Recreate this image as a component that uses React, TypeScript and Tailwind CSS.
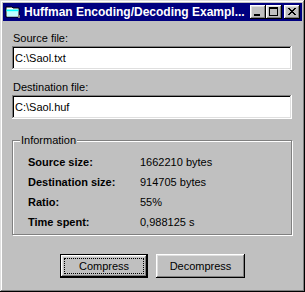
import React from 'react';

// Win95-style bevels
const RAISED =
  'shadow-[inset_-1px_-1px_#000,inset_1px_1px_#fff,inset_-2px_-2px_#808080,inset_2px_2px_#dfdfdf]';
const SUNKEN =
  'shadow-[inset_-1px_-1px_#fff,inset_1px_1px_#808080,inset_-2px_-2px_#dfdfdf,inset_2px_2px_#000]';

const INFO = [
  ['Source size:', '1662210 bytes'],
  ['Destination size:', '914705 bytes'],
  ['Ratio:', '55%'],
  ['Time spent:', '0,988125 s'],
];

function AppIcon() {
  return (
    <svg width="16" height="16" viewBox="0 0 16 16" aria-hidden className="shrink-0">
      <path d="M1 3h6l1 1h6v9H1z" fill="#fff" stroke="#000" strokeWidth="1" />
      <rect x="1.5" y="5.5" width="12" height="2" fill="#00ffff" />
      <path d="M2 7.5h11v5H2z" fill="#c0ffff" />
      <rect x="13" y="11" width="2" height="3" fill="#808080" />
    </svg>
  );
}

function CaptionButton({ kind }: { kind: 'min' | 'max' | 'close' }) {
  return (
    <button
      type="button"
      className={`relative flex h-[14px] w-[16px] items-center justify-center bg-[#c0c0c0] ${RAISED}`}
    >
      {kind === 'min' && <span className="absolute left-[4px] top-[9px] h-[2px] w-[6px] bg-black" />}
      {kind === 'max' && (
        <span className="absolute left-[3px] top-[2px] h-[9px] w-[9px] border border-t-2 border-black" />
      )}
      {kind === 'close' && (
        <svg width="8" height="7" viewBox="0 0 8 7" className="absolute left-[4px] top-[3px]" aria-hidden>
          <path
            d="M0 0h2v1h1v1h2V1h1V0h2v1H7v1H6v1H5v1h1v1h1v1h1v1H6V6H5V5H3v1H2v1H0V6h1V5h1V4h1V3H2V2H1V1H0z"
            fill="#000"
          />
        </svg>
      )}
    </button>
  );
}

function Field({ label, value }: { label: string; value: string }) {
  return (
    <div className="flex flex-col">
      <span className="pl-[1px]">{label}</span>
      <div className={`mt-[1px] flex h-[24px] items-center bg-white pl-[3px] ${SUNKEN}`}>{value}</div>
    </div>
  );
}

export default function App() {
  return (
    <div
      className={`flex h-[292px] w-[305px] flex-col bg-[#c0c0c0] p-[3px] font-['Liberation_Sans',Arial,sans-serif] text-[11px] leading-[13px] text-black shadow-[inset_-1px_-1px_#000,inset_1px_1px_#dfdfdf,inset_-2px_-2px_#808080,inset_2px_2px_#fff]`}
    >
      <div className="flex h-[18px] items-center bg-[#000080] pl-[2px] pr-[2px]">
        <AppIcon />
        <span className="ml-[3px] flex-1 whitespace-nowrap text-[12px] font-bold text-white">
          Huffman Encoding/Decoding Exampl...
        </span>
        <div className="flex">
          <CaptionButton kind="min" />
          <CaptionButton kind="max" />
          <div className="w-[2px]" />
          <CaptionButton kind="close" />
        </div>
      </div>

      <div className="flex flex-col pl-[9px] pr-[10px]">
        <div className="mt-[11px]">
          <Field label="Source file:" value="C:\Saol.txt" />
        </div>
        <div className="mt-[11px]">
          <Field label="Destination file:" value="C:\Saol.huf" />
        </div>

        <div className="relative mt-[21px] h-[95px] border border-[#808080] shadow-[inset_1px_1px_#fff,1px_1px_#fff]">
          <span className="absolute -top-[7px] left-[7px] bg-[#c0c0c0] px-[1px]">Information</span>
          <div className="grid grid-cols-[112px_1fr] pl-[15px] pt-[11px]">
            {INFO.map(([k, v]) => (
              <React.Fragment key={k}>
                <span className="flex h-[20px] items-center font-bold">{k}</span>
                <span className="flex h-[20px] items-center">{v}</span>
              </React.Fragment>
            ))}
          </div>
        </div>

        <div className="mt-[19px] flex gap-[8px] pl-[48px]">
          <button
            type="button"
            className={`flex h-[24px] w-[88px] items-center justify-center border border-black bg-[#c0c0c0] p-[3px] ${RAISED}`}
          >
            <span className="flex h-full w-full items-center justify-center border border-dotted border-black">
              Compress
            </span>
          </button>
          <button
            type="button"
            className={`flex h-[24px] w-[89px] items-center justify-center bg-[#c0c0c0] ${RAISED}`}
          >
            Decompress
          </button>
        </div>
      </div>
    </div>
  );
}
